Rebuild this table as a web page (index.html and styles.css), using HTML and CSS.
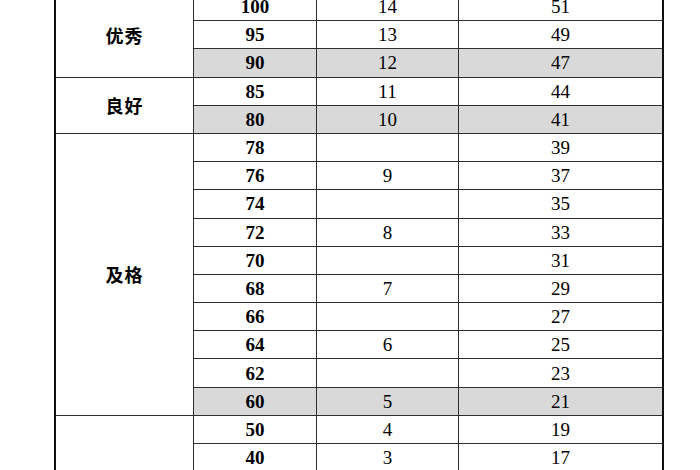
FILE: index.html
```html
<!DOCTYPE html>
<html lang="zh-CN">
<head>
<meta charset="utf-8">
<title>评分标准</title>
<link rel="stylesheet" href="styles.css">
</head>
<body>
<table class="score-table">
  <colgroup>
    <col class="c-level">
    <col class="c-score">
    <col class="c-count">
    <col class="c-count2">
  </colgroup>
  <tbody>
    <tr><td class="level" rowspan="3">优秀</td><td class="score">100</td><td class="val">14</td><td class="val last">51</td></tr>
    <tr><td class="score">95</td><td class="val">13</td><td class="val last">49</td></tr>
    <tr class="shade"><td class="score">90</td><td class="val">12</td><td class="val last">47</td></tr>
    <tr><td class="level" rowspan="2">良好</td><td class="score">85</td><td class="val">11</td><td class="val last">44</td></tr>
    <tr class="shade"><td class="score">80</td><td class="val">10</td><td class="val last">41</td></tr>
    <tr><td class="level" rowspan="10">及格</td><td class="score">78</td><td class="val"></td><td class="val last">39</td></tr>
    <tr><td class="score">76</td><td class="val">9</td><td class="val last">37</td></tr>
    <tr><td class="score">74</td><td class="val"></td><td class="val last">35</td></tr>
    <tr><td class="score">72</td><td class="val">8</td><td class="val last">33</td></tr>
    <tr><td class="score">70</td><td class="val"></td><td class="val last">31</td></tr>
    <tr><td class="score">68</td><td class="val">7</td><td class="val last">29</td></tr>
    <tr><td class="score">66</td><td class="val"></td><td class="val last">27</td></tr>
    <tr><td class="score">64</td><td class="val">6</td><td class="val last">25</td></tr>
    <tr><td class="score">62</td><td class="val"></td><td class="val last">23</td></tr>
    <tr class="shade"><td class="score">60</td><td class="val">5</td><td class="val last">21</td></tr>
    <tr><td class="level" rowspan="5">不及格</td><td class="score">50</td><td class="val">4</td><td class="val last">19</td></tr>
    <tr><td class="score">40</td><td class="val">3</td><td class="val last">17</td></tr>
    <tr><td class="score">30</td><td class="val">2</td><td class="val last">15</td></tr>
    <tr><td class="score">20</td><td class="val">1</td><td class="val last">13</td></tr>
    <tr><td class="score">10</td><td class="val"></td><td class="val last">11</td></tr>
  </tbody>
</table>
</body>
</html>
```
FILE: styles.css
```css
html, body {
  margin: 0;
  padding: 0;
  background: #ffffff;
  overflow: hidden;
}

body {
  height: 470px;
  color: #000000;
  font-family: "Liberation Serif", "Noto Sans CJK SC", serif;
}

.score-table {
  margin: -7px 0 0 54px;
  width: 610px;
  table-layout: fixed;
  border-collapse: separate;
  border-spacing: 0;
  border-left: 2px solid #101010;
  border-right: 2px solid #101010;
}

.c-level { width: 138px; }
.c-score { width: 123px; }
.c-count { width: 142px; }
.c-count2 { width: 203px; }

.score-table tr {
  height: 28.2px;
}

.score-table td {
  padding: 0;
  text-align: center;
  vertical-align: middle;
  border-right: 1px solid #2e2e2e;
  border-bottom: 1px solid #2e2e2e;
  line-height: 1;
}

.score-table td.last {
  border-right: none;
}

.level {
  font-family: "Noto Sans CJK SC", sans-serif;
  font-size: 18px;
  font-weight: 700;
  letter-spacing: 1px;
  background: #ffffff;
}

.score {
  font-family: "Liberation Serif", serif;
  font-weight: 700;
  font-size: 19px;
}

.val {
  font-family: "Liberation Serif", serif;
  font-size: 19px;
}

.shade .score,
.shade .val {
  background: #d9d9d9;
}
```
